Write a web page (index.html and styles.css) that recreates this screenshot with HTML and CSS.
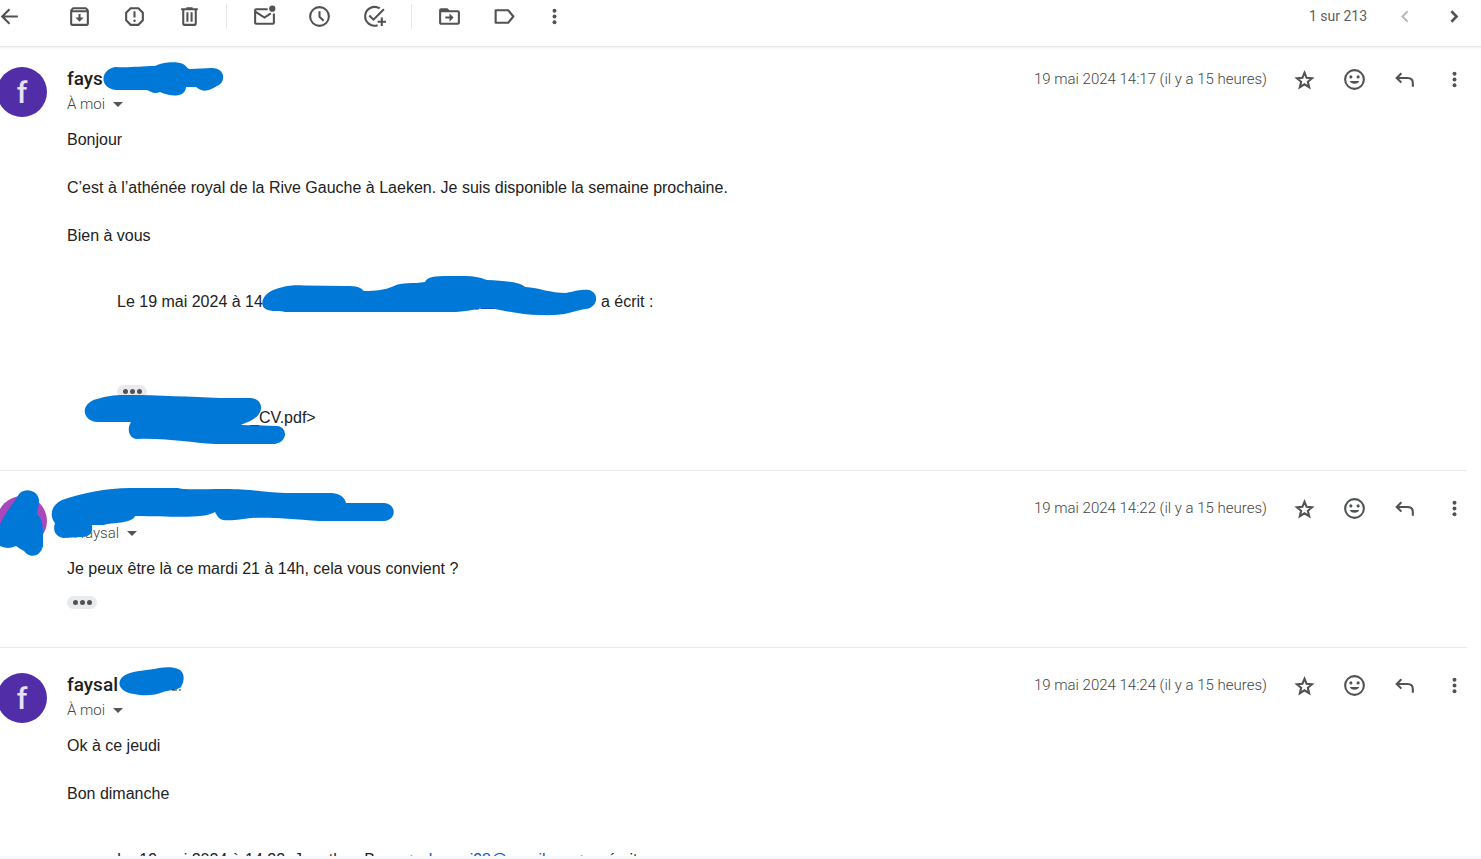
FILE: index.html
```
<!DOCTYPE html>
<html lang="fr">
<head>
    <meta charset="UTF-8">
    <meta name="viewport" content="width=device-width, initial-scale=1.0">
    <title>Conversation</title>
    <link rel="stylesheet" href="styles.css">
</head>
<body>
    <!-- Shared icons -->
    <svg class="sprite" aria-hidden="true">
        <symbol id="i-more" viewBox="0 0 24 24"><circle cx="12" cy="6.500" r="1.900"/><circle cx="12" cy="12" r="1.900"/><circle cx="12" cy="17.500" r="1.900"/></symbol>
        <symbol id="i-star" viewBox="0 0 24 24"><path d="M12 5.500l2 4.900 5.200.4-4 3.400 1.300 5.200-4.500-2.800-4.500 2.800 1.300-5.200-4-3.400 5.200-.4z" fill="none" stroke="currentColor" stroke-width="2"/></symbol>
        <symbol id="i-smile" viewBox="0 0 24 24"><path d="M12 2a10 10 0 1 0 0 20 10 10 0 0 0 0-20zm0 18a8 8 0 1 1 0-16 8 8 0 0 1 0 16z"/><circle cx="8.500" cy="9.500" r="1.500"/><circle cx="15.500" cy="9.500" r="1.500"/><path d="M7.500 13.500h9a4.700 3.500 0 0 1-9 0z"/></symbol>
        <symbol id="i-reply" viewBox="0 0 24 24"><path d="M9 6L4.500 10.500 9 15M5 10.500h10c3.500 0 5 2 5 5V19" fill="none" stroke="currentColor" stroke-width="2"/></symbol>
    </svg>

    <main class="mail">
        <div class="toolbar">
            <button class="back" aria-label="Retour"><svg viewBox="0 0 24 24"><path d="M20 12H6M12 5l-7 7 7 7" fill="none" stroke="currentColor" stroke-width="2"/></svg></button>
            <button aria-label="Archiver"><svg viewBox="0 0 24 24"><path d="M20.500 5.200l-1.400-1.700C18.900 3.200 18.500 3 18 3H6c-.5 0-.9.2-1.100.5L3.500 5.200C3.200 5.600 3 6 3 6.500V19c0 1.100.9 2 2 2h14c1.100 0 2-.9 2-2V6.500c0-.5-.2-.9-.5-1.300zM6.200 5h11.600l.8 1H5.400l.8-1zM5 19V8h14v11H5z"/><path d="M11 9.500h2V13h3l-4 4-4-4h3z"/></svg></button>
            <button aria-label="Signaler comme spam"><svg viewBox="0 0 24 24"><path d="M8.300 4h7.400L20 8.300v7.400L15.700 20H8.300L4 15.700V8.300z" fill="none" stroke="currentColor" stroke-width="2"/><path d="M11 7h2v6h-2z"/><circle cx="12" cy="16" r="1.200"/></svg></button>
            <button aria-label="Supprimer"><svg viewBox="0 0 24 24"><path d="M15 4V3H9v1H4v2h1v13c0 1.100.9 2 2 2h10c1.100 0 2-.9 2-2V6h1V4h-5zm2 15H7V6h10v13z"/><path d="M9 8h2v9H9zM13 8h2v9h-2z"/></svg></button>
            <span class="separator"></span>
            <button aria-label="Marquer comme non lu"><svg viewBox="0 0 24 24"><path d="M15 5H4a1 1 0 0 0-1 1v12a1 1 0 0 0 1 1h16a1 1 0 0 0 1-1V9M3.500 7.500L12 13l6-4" fill="none" stroke="currentColor" stroke-width="2"/><circle cx="19.500" cy="4.500" r="3"/></svg></button>
            <button aria-label="Mettre en attente"><svg viewBox="0 0 24 24"><circle cx="12" cy="12" r="9" fill="none" stroke="currentColor" stroke-width="2"/><path d="M12 7v5.300l4 3.700" fill="none" stroke="currentColor" stroke-width="2"/></svg></button>
            <button aria-label="Ajouter à Tasks"><svg viewBox="0 0 24 24"><path d="M17 4.300A9 9 0 1 0 15 20.300M7 11l4 4L21 5M19 13v8M15 17h8" fill="none" stroke="currentColor" stroke-width="2"/></svg></button>
            <span class="separator"></span>
            <button aria-label="Déplacer vers"><svg viewBox="0 0 24 24"><path d="M20 6h-8l-2-2H4a2 2 0 0 0-2 2v12c0 1.100.9 2 2 2h16a2 2 0 0 0 2-2V8a2 2 0 0 0-2-2zm0 12H4V8h16v10z"/><path d="M12 9l4 4-4 4v-3H8v-2h4z"/></svg></button>
            <button aria-label="Libellés"><svg viewBox="0 0 24 24"><path d="M3.500 6h12l5 6-5 6h-12z" fill="none" stroke="currentColor" stroke-width="2" stroke-linejoin="round"/></svg></button>
            <button class="narrow" aria-label="Plus"><svg><use href="#i-more"/></svg></button>
            <span class="count">1 sur 213</span>
            <button class="action off" aria-label="Plus récents" disabled><svg viewBox="0 0 24 24"><path d="M15 7l-5 5 5 5" fill="none" stroke="currentColor" stroke-width="2"/></svg></button>
            <button class="action" aria-label="Plus anciens"><svg viewBox="0 0 24 24"><path d="M9 7l5 5-5 5" fill="none" stroke="currentColor" stroke-width="2.500"/></svg></button>
        </div>

        <article class="message first">
            <div class="avatar">f</div>
            <div class="content">
                <header>
                    <div class="sender">
                        <h2>fays</h2>
                        <button class="recipient">À moi <span class="caret"></span></button>
                    </div>
                    <time>19 mai 2024 14:17 (il y a 15 heures)</time>
                    <button class="action" aria-label="Suivre"><svg><use href="#i-star"/></svg></button>
                    <button class="action" aria-label="Ajouter une réaction"><svg><use href="#i-smile"/></svg></button>
                    <button class="action" aria-label="Répondre"><svg><use href="#i-reply"/></svg></button>
                    <button class="action" aria-label="Plus"><svg><use href="#i-more"/></svg></button>
                </header>
                <div class="text">
                    <p>Bonjour</p>
                    <p>C’est à l’athénée royal de la Rive Gauche à Laeken. Je suis disponible la semaine prochaine.</p>
                    <p>Bien à vous</p>
                    <blockquote>
                        <p>Le 19 mai 2024 à 14<span class="hidden-address"></span>a écrit :</p>
                        <button class="trimmed" aria-label="Afficher le contenu abrégé"><i></i><i></i><i></i></button>
                        <p class="file"><span class="hidden-file"></span>_CV.pdf&gt;</p>
                    </blockquote>
                </div>
            </div>
            <svg class="scribble" width="700" height="420" viewBox="0 47 700 420" aria-hidden="true">
                <path d="M115 67C130 68 140 66 155 66C162 62 177 61 183 64C187 66 187 69 190 69L212 68C226 68 226 83 217 86C208 91 204 93 196 87L186 87C185 98 171 97 160 92C154 95 150 91 147 90L116 90C99 88 100 70 115 67z"/>
                <path d="M276 289C288 285 294 285 304 285.500L346 286C357 286 360 287 364 291C375 291 386 290 394 286C401 282 414 284 425 282C428 275 440 276 460 276C476 276 478 277 487 280C505 281 520 282 525 287C540 288 550 293 566 293C578 290 584 289 589 290C600 293 598 308 585 309C570 312 566 316 540 315C525 315 510 312 495 309C482 306 470 312 450 312L285 312C280 310 274 312 268 310C259 308 260 294 276 289z"/>
                <path d="M97 399C108 396 112 395 125 395C160 395 190 397 220 398L251 398C262 399 265 411 255 418C250 422 244 423 241 425L277 426C288 427 288 442 275 444L215 444C190 443 170 438 137 439C128 438 127 428 131 422L98 422C81 421 80 403 97 399z"/>
                <path class="link-edge" d="M475 309h4M481 308.500h13"/>
            </svg>
        </article>

        <hr>

        <article class="message">
            <div class="avatar pink"></div>
            <div class="content">
                <header>
                    <div class="sender">
                        <h2>&nbsp;</h2>
                        <button class="recipient">À faysal <span class="caret"></span></button>
                    </div>
                    <time>19 mai 2024 14:22 (il y a 15 heures)</time>
                    <button class="action" aria-label="Suivre"><svg><use href="#i-star"/></svg></button>
                    <button class="action" aria-label="Ajouter une réaction"><svg><use href="#i-smile"/></svg></button>
                    <button class="action" aria-label="Répondre"><svg><use href="#i-reply"/></svg></button>
                    <button class="action" aria-label="Plus"><svg><use href="#i-more"/></svg></button>
                </header>
                <div class="text">
                    <p>Je peux être là ce mardi 21 à 14h, cela vous convient ?</p>
                    <button class="trimmed" aria-label="Afficher le contenu abrégé"><i></i><i></i><i></i></button>
                </div>
            </div>
            <svg class="scribble" width="420" height="120" viewBox="0 471 420 120" aria-hidden="true">
                <path d="M19 494C25 487 38 490 39 500C39 506 37 510 37 514C44 520 43 530 43 546C40 558 29 558 24 551C20 549 18 547 16 546C9 549 5 548 0 546V525C4 514 13 504 19 494z"/>
                <path d="M62 500C82 493 106 488 130 488L178 488C182 490 200 489 225 489C250 489 262 492 285 493L332 493C341 494 345 498 346 503L384 503C397 504 397 520 384 521L320 521C290 519 270 517 252 518C240 519 235 521 223 520C219 519 217 516 215 512C205 518 185 517 135 516C132 524 112 522 104 525L92 525C93 532 90 537 82 537L63 538C54 536 53 529 55 523C49 516 51 505 62 500z"/>
            </svg>
        </article>

        <hr>

        <article class="message">
            <div class="avatar">f</div>
            <div class="content">
                <header>
                    <div class="sender">
                        <h2>faysal</h2>
                        <button class="recipient">À moi <span class="caret"></span></button>
                    </div>
                    <time>19 mai 2024 14:24 (il y a 15 heures)</time>
                    <button class="action" aria-label="Suivre"><svg><use href="#i-star"/></svg></button>
                    <button class="action" aria-label="Ajouter une réaction"><svg><use href="#i-smile"/></svg></button>
                    <button class="action" aria-label="Répondre"><svg><use href="#i-reply"/></svg></button>
                    <button class="action" aria-label="Plus"><svg><use href="#i-more"/></svg></button>
                </header>
                <div class="text">
                    <p>Ok à ce jeudi</p>
                    <p>Bon dimanche</p>
                    <blockquote>
                        <p>Le 19 mai 2024 à 14:22, Jonathan Bxxx &lt;<a href="#">xxhxxxxi98@gmail.com</a>&gt; a écrit :</p>
                    </blockquote>
                </div>
            </div>
            <svg class="scribble" width="300" height="100" viewBox="0 648 300 100" aria-hidden="true">
                <path d="M130 673C140 670 150 670 159 668C166 667 174 667 178 669C185 672 185 680 181 687C178 690 170 690 163 692C154 696 143 696 134 694C117 692 114 678 130 673z"/>
                <path class="name-edge" d="M172 690h5M179 690h2"/>
            </svg>
        </article>
    </main>
</body>
</html>
```
FILE: styles.css
```
* {
    box-sizing: border-box;
}
body {
    margin: 0;
    height: 100vh;
    padding-bottom: 3px;
    background-color: #f6f8fc;
    font-family: "Liberation Sans", Arial, sans-serif;
    font-size: 16px;
    color: #222;
    overflow: hidden;
}
.sprite {
    display: none;
}
.mail {
    height: 100%;
    background-color: #fff;
    overflow: hidden;
}
button {
    padding: 0;
    border: none;
    background: none;
    font: inherit;
    color: inherit;
    cursor: pointer;
}

/* Toolbar */
.toolbar {
    display: flex;
    align-items: center;
    height: 47px;
    padding: 0 2px 14px 0;
    border-bottom: 1px solid #e6e6e6;
    box-shadow: 0 1px 2px rgba(0, 0, 0, 0.06);
    color: #505352;
}
.toolbar button {
    display: flex;
    justify-content: center;
    width: 55px;
}
.toolbar .back {
    width: 52px;
    justify-content: flex-start;
    margin-left: -3px;
    margin-right: 3px;
}
.toolbar .narrow {
    width: 45px;
}
.toolbar svg, .action svg {
    width: 25px;
    height: 25px;
    fill: currentColor;
    flex: none;
}
.separator {
    width: 1px;
    height: 25px;
    margin: 0 10px 0 9px;
    background-color: #e3e8e8;
}
.count {
    margin-left: auto;
    margin-right: 12px;
    font-family: Roboto, sans-serif;
    font-size: 14px;
    color: #5e5e5e;
}
.toolbar .action, .action {
    display: flex;
    justify-content: center;
    width: 50px;
    flex: none;
}
.toolbar .off {
    color: #bbb;
}

/* Messages */
.message {
    position: relative;
    display: flex;
    padding: 25px 2px 38px 0;
}
.message.first {
    padding-top: 20px;
    padding-bottom: 40px;
}
hr {
    height: 1px;
    margin: 0 14px 0 0;
    border: none;
    background-color: #ebebeb;
}
.avatar {
    flex: none;
    width: 50px;
    height: 50px;
    margin: 0 20px 0 -3px;
    border-radius: 50%;
    background-color: #512da8;
    color: #e8e0f5;
    font-family: Roboto, sans-serif;
    font-size: 30px;
    font-weight: 500;
    line-height: 52px;
    text-align: center;
}
.avatar.pink {
    background-color: #ab47bc;
}
.content {
    flex: 1;
}
header {
    display: flex;
    align-items: flex-start;
    color: #505352;
}
.sender {
    flex: 1;
}
h2 {
    margin: 0 0 1px;
    font-family: Roboto, sans-serif;
    font-size: 19px;
    font-weight: 500;
    line-height: 24px;
    color: #1f1f1f;
}
.recipient {
    display: flex;
    align-items: center;
    gap: 8px;
    font-family: Roboto, sans-serif;
    font-size: 15px;
    font-weight: 300;
    line-height: 25px;
    color: #444;
}
.caret {
    border: 5px solid transparent;
    border-top-color: #555;
    border-bottom: none;
}
time {
    margin-right: 12px;
    font-family: Roboto, sans-serif;
    font-size: 15px;
    font-weight: 300;
    line-height: 24px;
    color: #444;
}
.text {
    margin-top: 11px;
    line-height: 24px;
}
.text p {
    margin: 0 0 24px;
}
blockquote {
    margin: 42px 0 0 50px;
}
.hidden-address {
    display: inline-block;
    width: 338px;
}
.hidden-file {
    display: inline-block;
    width: 133px;
}
.trimmed {
    display: flex;
    align-items: center;
    justify-content: center;
    gap: 2px;
    width: 30px;
    height: 13px;
    margin-top: 15px;
    border-radius: 7px;
    background-color: #e8eaed;
}
.trimmed i {
    width: 5px;
    height: 5px;
    border-radius: 50%;
    background-color: #505352;
}
blockquote .trimmed {
    margin-top: 71px;
}
.text .file {
    margin: 8px 0 0;
}
.text p:has(+ .trimmed) {
    margin-bottom: 0;
}
a {
    color: #1155cc;
}

/* Marker strokes over names and addresses */
.scribble {
    position: absolute;
    left: 0;
    top: 0;
    fill: #0078d7;
    pointer-events: none;
}
.link-edge {
    stroke: #1155cc;
}
.name-edge {
    stroke: #1f1f1f;
}
```
